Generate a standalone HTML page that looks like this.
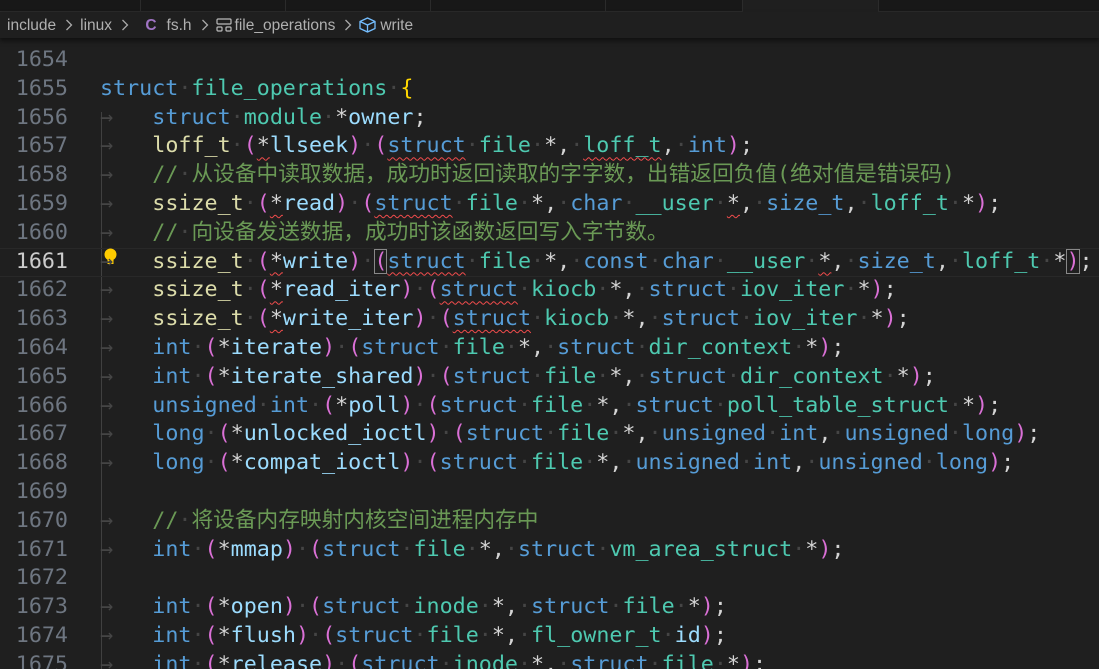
<!DOCTYPE html>
<html><head><meta charset="utf-8"><style>
*{margin:0;padding:0;box-sizing:border-box}
html,body{width:1099px;height:669px;overflow:hidden}
body{background:#1f1f1f;position:relative;font-family:"DejaVu Sans Mono","Liberation Mono","Noto Sans CJK SC",monospace}
#tabs{position:absolute;left:0;top:0;width:1099px;height:12px;background:#181818;border-bottom:1px solid #2b2b2b}
.tab{position:absolute;top:0;height:12px;border-right:1px solid #2b2b2b}
#act{position:absolute;left:742px;top:0;width:137px;height:12px;background:#1f1f1f;border-left:1px solid #2b2b2b;border-right:1px solid #2b2b2b}
#bc{position:absolute;left:0;top:12px;width:1099px;height:26px;background:#1f1f1f;font-family:"Liberation Sans","DejaVu Sans",sans-serif;font-size:15.5px;color:#b0b0b0;line-height:27px;padding-left:7px;white-space:nowrap;box-shadow:0 3px 4px #111;z-index:3}
.sep{display:inline-block;width:8px;height:12px;margin:0 7px 0 9px;vertical-align:-1px}
#ed{position:absolute;left:0;top:38px;width:1099px;height:631px;overflow:hidden}
.ln{position:absolute;left:0;width:68px;text-align:right;color:#6e7681;font-size:21.7px;height:28.8px;line-height:28.8px}
.cl{position:absolute;left:100px;white-space:pre;font-size:21.7px;height:28.8px;line-height:28.8px;color:#d4d4d4}
.k{color:#569cd6}.t{color:#4ec9b0}.y{color:#dcdcaa}.v{color:#9cdcfe}.p{color:#da70d6}.g{color:#ffd700}.c{color:#6a9955;font-family:"DejaVu Sans Mono","Noto Sans CJK SC",monospace}
b{font-weight:normal;color:#454545}
.tb{display:inline-block;width:52.3px;color:#454545}
.sq{text-decoration:underline wavy #f14c4c;text-decoration-thickness:1px;text-underline-offset:4px}
.bx{outline:1px solid #888;outline-offset:-1px}
</style></head><body>
<div id="tabs"><div class="tab" style="left:0;width:141px"></div><div class="tab" style="left:141px;width:145px"></div><div class="tab" style="left:286px;width:145px"></div><div class="tab" style="left:431px;width:175px"></div><div class="tab" style="left:606px;width:137px"></div><div id="act"></div></div>
<div id="bc">include<svg class="sep" viewBox="0 0 8 12"><path d="M1.5 1 L6.5 6 L1.5 11" fill="none" stroke="#aaa" stroke-width="1.3"/></svg>linux<svg class="sep" viewBox="0 0 8 12"><path d="M1.5 1 L6.5 6 L1.5 11" fill="none" stroke="#aaa" stroke-width="1.3"/></svg> <span style="color:#a074c4;font-weight:bold;margin:0 10px 0 5px">C</span>fs.h<svg class="sep" viewBox="0 0 8 12"><path d="M1.5 1 L6.5 6 L1.5 11" fill="none" stroke="#aaa" stroke-width="1.3"/></svg><svg width="16" height="14" viewBox="0 0 16 14" style="vertical-align:-2px;margin-right:3px"><rect x="1" y="1" width="14" height="5" rx="1" fill="none" stroke="#bbb" stroke-width="1.2"/><rect x="1" y="9" width="5" height="4" rx="1" fill="none" stroke="#bbb" stroke-width="1.2"/><rect x="10" y="9" width="5" height="4" rx="1" fill="none" stroke="#bbb" stroke-width="1.2"/></svg>file_operations<svg class="sep" viewBox="0 0 8 12"><path d="M1.5 1 L6.5 6 L1.5 11" fill="none" stroke="#aaa" stroke-width="1.3"/></svg><svg width="17" height="16" viewBox="0 0 17 16" style="vertical-align:-3px;margin-right:4px"><path d="M8.5 1 L16 4.5 L16 11.5 L8.5 15 L1 11.5 L1 4.5 Z M1 4.5 L8.5 8 L16 4.5 M8.5 8 L8.5 15" fill="none" stroke="#75beff" stroke-width="1.3" stroke-linejoin="round"/></svg>write</div>
<div id="ed">
<div style="position:absolute;left:101px;top:74px;width:1px;height:600px;background:#404040"></div>
<div style="position:absolute;left:0;top:210px;width:1099px;height:29px;border-top:1px solid #282828;border-bottom:1px solid #282828"></div>
<svg style="position:absolute;left:103px;top:210px" width="15" height="19" viewBox="0 0 15 19"><circle cx="7.5" cy="6.5" r="6" fill="#ffcc00"/><rect x="4.5" y="10" width="6" height="6" fill="#ffcc00"/><rect x="6" y="13" width="3" height="2" fill="#1f1f1f"/></svg>
<div class="ln" style="top:8px">1654</div><div class="ln" style="top:36.8px">1655</div><div class="ln" style="top:65.6px">1656</div><div class="ln" style="top:94.4px">1657</div><div class="ln" style="top:123.2px">1658</div><div class="ln" style="top:152px">1659</div><div class="ln" style="top:180.8px">1660</div><div class="ln" style="top:209.6px;color:#ccc">1661</div><div class="ln" style="top:238.4px">1662</div><div class="ln" style="top:267.2px">1663</div><div class="ln" style="top:296px">1664</div><div class="ln" style="top:324.8px">1665</div><div class="ln" style="top:353.6px">1666</div><div class="ln" style="top:382.4px">1667</div><div class="ln" style="top:411.2px">1668</div><div class="ln" style="top:440px">1669</div><div class="ln" style="top:468.8px">1670</div><div class="ln" style="top:497.6px">1671</div><div class="ln" style="top:526.4px">1672</div><div class="ln" style="top:555.2px">1673</div><div class="ln" style="top:584px">1674</div><div class="ln" style="top:612.8px">1675</div>
<div class="cl" style="top:36.8px"><span class="k">struct</span><b>·</b><span class="t">file_operations</span><b>·</b><span class="g">{</span></div>
<div class="cl" style="top:65.6px"><span class="tb">→</span><span class="k">struct</span><b>·</b><span class="t">module</span><b>·</b>*<span class="v">owner</span>;</div>
<div class="cl" style="top:94.4px"><span class="tb">→</span><span class="y">loff_t</span><b>·</b><span class="p">(</span><span class="sq">*</span><span class="v">llseek</span><span class="p">)</span><b>·</b><span class="p">(</span><span class="k sq">struct</span><b>·</b><span class="t">file</span><b>·</b>*,<b>·</b><span class="t sq">loff_t</span>,<b>·</b><span class="k">int</span><span class="p">)</span>;</div>
<div class="cl" style="top:123.2px"><span class="tb">→</span><span class="c">//<b>·</b>从设备中读取数据，成功时返回读取的字字数，出错返回负值(绝对值是错误码)</span></div>
<div class="cl" style="top:152px"><span class="tb">→</span><span class="y">ssize_t</span><b>·</b><span class="p">(</span><span class="sq">*</span><span class="v">read</span><span class="p">)</span><b>·</b><span class="p">(</span><span class="k sq">struct</span><b>·</b><span class="t">file</span><b>·</b>*,<b>·</b><span class="k">char</span><b>·</b><span class="t">__user</span><b>·</b><span class="sq">*</span>,<b>·</b><span class="k">size_t</span>,<b>·</b><span class="t">loff_t</span><b>·</b>*<span class="p">)</span>;</div>
<div class="cl" style="top:180.8px"><span class="tb">→</span><span class="c">//<b>·</b>向设备发送数据，成功时该函数返回写入字节数。</span></div>
<div class="cl" style="top:209.6px"><span class="tb">→</span><span class="y">ssize_t</span><b>·</b><span class="p">(</span><span class="sq">*</span><span class="v">write</span><span class="p">)</span><b>·</b><span class="p bx">(</span><span class="k sq">struct</span><b>·</b><span class="t">file</span><b>·</b>*,<b>·</b><span class="k">const</span><b>·</b><span class="k">char</span><b>·</b><span class="t">__user</span><b>·</b><span class="sq">*</span>,<b>·</b><span class="k">size_t</span>,<b>·</b><span class="t">loff_t</span><b>·</b>*<span class="p bx">)</span>;</div>
<div class="cl" style="top:238.4px"><span class="tb">→</span><span class="y">ssize_t</span><b>·</b><span class="p">(</span><span class="sq">*</span><span class="v">read_iter</span><span class="p">)</span><b>·</b><span class="p">(</span><span class="k sq">struct</span><b>·</b><span class="t">kiocb</span><b>·</b>*,<b>·</b><span class="k">struct</span><b>·</b><span class="t">iov_iter</span><b>·</b>*<span class="p">)</span>;</div>
<div class="cl" style="top:267.2px"><span class="tb">→</span><span class="y">ssize_t</span><b>·</b><span class="p">(</span><span class="sq">*</span><span class="v">write_iter</span><span class="p">)</span><b>·</b><span class="p">(</span><span class="k sq">struct</span><b>·</b><span class="t">kiocb</span><b>·</b>*,<b>·</b><span class="k">struct</span><b>·</b><span class="t">iov_iter</span><b>·</b>*<span class="p">)</span>;</div>
<div class="cl" style="top:296px"><span class="tb">→</span><span class="k">int</span><b>·</b><span class="p">(</span>*<span class="v">iterate</span><span class="p">)</span><b>·</b><span class="p">(</span><span class="k">struct</span><b>·</b><span class="t">file</span><b>·</b>*,<b>·</b><span class="k">struct</span><b>·</b><span class="t">dir_context</span><b>·</b>*<span class="p">)</span>;</div>
<div class="cl" style="top:324.8px"><span class="tb">→</span><span class="k">int</span><b>·</b><span class="p">(</span>*<span class="v">iterate_shared</span><span class="p">)</span><b>·</b><span class="p">(</span><span class="k">struct</span><b>·</b><span class="t">file</span><b>·</b>*,<b>·</b><span class="k">struct</span><b>·</b><span class="t">dir_context</span><b>·</b>*<span class="p">)</span>;</div>
<div class="cl" style="top:353.6px"><span class="tb">→</span><span class="k">unsigned</span><b>·</b><span class="k">int</span><b>·</b><span class="p">(</span>*<span class="v">poll</span><span class="p">)</span><b>·</b><span class="p">(</span><span class="k">struct</span><b>·</b><span class="t">file</span><b>·</b>*,<b>·</b><span class="k">struct</span><b>·</b><span class="t">poll_table_struct</span><b>·</b>*<span class="p">)</span>;</div>
<div class="cl" style="top:382.4px"><span class="tb">→</span><span class="k">long</span><b>·</b><span class="p">(</span>*<span class="v">unlocked_ioctl</span><span class="p">)</span><b>·</b><span class="p">(</span><span class="k">struct</span><b>·</b><span class="t">file</span><b>·</b>*,<b>·</b><span class="k">unsigned</span><b>·</b><span class="k">int</span>,<b>·</b><span class="k">unsigned</span><b>·</b><span class="k">long</span><span class="p">)</span>;</div>
<div class="cl" style="top:411.2px"><span class="tb">→</span><span class="k">long</span><b>·</b><span class="p">(</span>*<span class="v">compat_ioctl</span><span class="p">)</span><b>·</b><span class="p">(</span><span class="k">struct</span><b>·</b><span class="t">file</span><b>·</b>*,<b>·</b><span class="k">unsigned</span><b>·</b><span class="k">int</span>,<b>·</b><span class="k">unsigned</span><b>·</b><span class="k">long</span><span class="p">)</span>;</div>
<div class="cl" style="top:468.8px"><span class="tb">→</span><span class="c">//<b>·</b>将设备内存映射内核空间进程内存中</span></div>
<div class="cl" style="top:497.6px"><span class="tb">→</span><span class="k">int</span><b>·</b><span class="p">(</span>*<span class="v">mmap</span><span class="p">)</span><b>·</b><span class="p">(</span><span class="k">struct</span><b>·</b><span class="t">file</span><b>·</b>*,<b>·</b><span class="k">struct</span><b>·</b><span class="t">vm_area_struct</span><b>·</b>*<span class="p">)</span>;</div>
<div class="cl" style="top:555.2px"><span class="tb">→</span><span class="k">int</span><b>·</b><span class="p">(</span>*<span class="v">open</span><span class="p">)</span><b>·</b><span class="p">(</span><span class="k">struct</span><b>·</b><span class="t">inode</span><b>·</b>*,<b>·</b><span class="k">struct</span><b>·</b><span class="t">file</span><b>·</b>*<span class="p">)</span>;</div>
<div class="cl" style="top:584px"><span class="tb">→</span><span class="k">int</span><b>·</b><span class="p">(</span>*<span class="v">flush</span><span class="p">)</span><b>·</b><span class="p">(</span><span class="k">struct</span><b>·</b><span class="t">file</span><b>·</b>*,<b>·</b><span class="t">fl_owner_t</span><b>·</b><span class="v">id</span><span class="p">)</span>;</div>
<div class="cl" style="top:612.8px"><span class="tb">→</span><span class="k">int</span><b>·</b><span class="p">(</span>*<span class="v">release</span><span class="p">)</span><b>·</b><span class="p">(</span><span class="k">struct</span><b>·</b><span class="t">inode</span><b>·</b>*,<b>·</b><span class="k">struct</span><b>·</b><span class="t">file</span><b>·</b>*<span class="p">)</span>;</div>
</div>
</body></html>
